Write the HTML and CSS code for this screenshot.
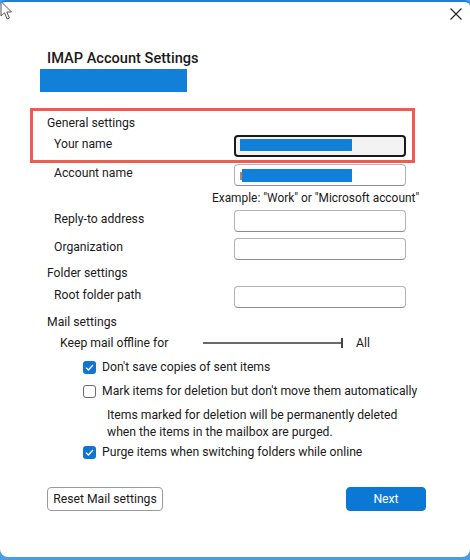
FILE: index.html
```
<!DOCTYPE html>
<html lang="en">
<head>
<meta charset="utf-8">
<title>IMAP Account Settings</title>
<link rel="stylesheet" href="styles.css">
</head>
<body>
<div class="window">
  <svg class="cursor" width="14" height="20" viewBox="0 0 14 20"><path d="M1 0.5 L1 15 L4.5 11.8 L7.2 18 L9.4 17 L6.8 11 L11.5 11 Z" fill="#fff" stroke="#555" stroke-width="1"/></svg>
  <button class="close" aria-label="Close"><svg width="12" height="12" viewBox="0 0 12 12"><path d="M0.5 0.5 L11.5 11.5 M11.5 0.5 L0.5 11.5" stroke="#222" stroke-width="1.1" fill="none"/></svg></button>
  <div class="content">
    <h1 class="title">IMAP Account Settings</h1>
    <div class="redact redact-title"></div>

    <div class="highlight"></div>
    <div class="section">General settings</div>
    <div class="row first">
      <span class="label">Your name</span>
      <div class="input focused"><span class="redact redact-in"></span></div>
    </div>
    <div class="row">
      <span class="label">Account name</span>
      <div class="input"><span class="ghost"></span><span class="redact redact-in2"></span></div>
    </div>
    <div class="example">Example: "Work" or "Microsoft account"</div>
    <div class="row r-reply">
      <span class="label">Reply-to address</span>
      <div class="input"></div>
    </div>
    <div class="row r-org">
      <span class="label">Organization</span>
      <div class="input"></div>
    </div>

    <div class="section s-folder">Folder settings</div>
    <div class="row r-root">
      <span class="label">Root folder path</span>
      <div class="input"></div>
    </div>

    <div class="section s-mail">Mail settings</div>
    <div class="slider-row">
      <span class="slider-label">Keep mail offline for</span>
      <div class="slider"><span class="track"></span><span class="thumb"></span></div>
      <span class="slider-value">All</span>
    </div>

    <div class="check c1"><span class="box checked"><svg width="9" height="7" viewBox="0 0 9 7"><path d="M1 3.6 L3.4 6 L8 1" stroke="#fff" stroke-width="1.3" fill="none"/></svg></span><span>Don't save copies of sent items</span></div>
    <div class="check c2"><span class="box"></span><span>Mark items for deletion but don't move them automatically</span></div>
    <p class="desc">Items marked for deletion will be permanently deleted<br>when the items in the mailbox are purged.</p>
    <div class="check c3"><span class="box checked"><svg width="9" height="7" viewBox="0 0 9 7"><path d="M1 3.6 L3.4 6 L8 1" stroke="#fff" stroke-width="1.3" fill="none"/></svg></span><span>Purge items when switching folders while online</span></div>

    <div class="buttons">
      <button class="btn secondary">Reset Mail settings</button>
      <button class="btn primary">Next</button>
    </div>
  </div>
</div>
</body>
</html>
```
FILE: styles.css
```
html, body {
  margin: 0;
  padding: 0;
  background: #4a9de2;
}
body {
  font-family: Roboto, "Liberation Sans", sans-serif;
  font-size: 12.2px;
  color: #1b1b1b;
}
.window {
  position: relative;
  box-sizing: border-box;
  width: 470px;
  height: 557px;
  background: #fff;
  border-top: 2px solid #1f7fd6;
  border-radius: 6px 6px 8px 8px;
  overflow: hidden;
}
.cursor {
  position: absolute;
  left: 0;
  top: -1px;
}
.close {
  position: absolute;
  left: 450px;
  top: 6px;
  width: 12px;
  height: 12px;
  padding: 0;
  border: 0;
  background: none;
  display: flex;
}
.content {
  padding: 45px 0 0 47px;
}
.title {
  margin: 0;
  font-size: 14.6px;
  font-weight: 500;
  line-height: 22px;
  color: #1a1a1a;
}
.redact {
  display: block;
  background: #127fd8;
}
.redact-title {
  width: 147px;
  height: 23px;
  margin-left: -7px;
}
.highlight {
  position: absolute;
  left: 30px;
  top: 106px;
  width: 379px;
  height: 49px;
  border: 3px solid #f05a4f;
}
.section {
  line-height: 16px;
  margin-top: 23px;
}
.s-folder { margin-top: 5px; }
.s-mail { margin-top: 6px; }
.row {
  display: flex;
  align-items: center;
  margin-top: 7px;
}
.row.first { margin-top: 4px; }
.r-reply { margin-top: 4px; }
.r-org { margin-top: 6px; }
.r-root { margin-top: 5px; }
.label {
  width: 187px;
  padding-left: 7px;
  box-sizing: border-box;
  margin-top: -4px;
}
.input {
  position: relative;
  box-sizing: border-box;
  width: 172px;
  height: 22px;
  border: 1px solid #b3b3b3;
  border-bottom-color: #8a8a8a;
  border-radius: 4px;
  background: #fff;
}
.input.focused {
  border: 2px solid #1a1a1a;
  background: #f3f3f3;
}
.redact-in {
  position: absolute;
  left: 4px;
  top: 2px;
  width: 112px;
  height: 12px;
}
.redact-in2 {
  position: absolute;
  left: 7px;
  top: 4px;
  width: 110px;
  height: 13px;
}
.ghost {
  position: absolute;
  left: 5px;
  top: 7px;
  width: 3px;
  height: 8px;
  background: #9a8a80;
}
.example {
  margin: 4px 0 0 165px;
  line-height: 16px;
  font-size: 11.9px;
}
.slider-row {
  display: flex;
  align-items: center;
  margin-top: 5px;
  line-height: 16px;
}
.slider-label {
  width: 143px;
  padding-left: 13px;
}
.slider {
  position: relative;
  width: 140px;
  height: 12px;
}
.track {
  position: absolute;
  left: 0;
  right: 0;
  top: 5px;
  height: 2px;
  background: #6a6a6a;
}
.thumb {
  position: absolute;
  right: 0;
  top: 1px;
  width: 2px;
  height: 10px;
  background: #444;
}
.slider-value {
  margin-left: 13px;
}
.check {
  display: flex;
  align-items: center;
  gap: 6px;
  margin-left: 36px;
  margin-top: 8px;
  line-height: 16px;
}
.c3 { margin-top: 3px; }
.box {
  box-sizing: border-box;
  width: 13px;
  height: 13px;
  border: 1px solid #6b6b6b;
  border-radius: 3px;
  background: #fff;
  display: flex;
  align-items: center;
  justify-content: center;
}
.box.checked {
  border: 0;
  background: #0f74d2;
}
.desc {
  margin: 8px 0 0 60px;
  line-height: 17px;
}
.buttons {
  display: flex;
  justify-content: space-between;
  width: 379px;
  margin-top: 27px;
}
.btn {
  box-sizing: border-box;
  height: 24px;
  font-family: inherit;
  font-size: 12.2px;
  border-radius: 4px;
  padding: 0;
}
.secondary {
  width: 116px;
  background: #fff;
  border: 1px solid #9a9a9a;
  color: #1a1a1a;
}
.primary {
  width: 80px;
  background: #0c78d6;
  border: 1px solid #0c78d6;
  color: #fff;
}
```
